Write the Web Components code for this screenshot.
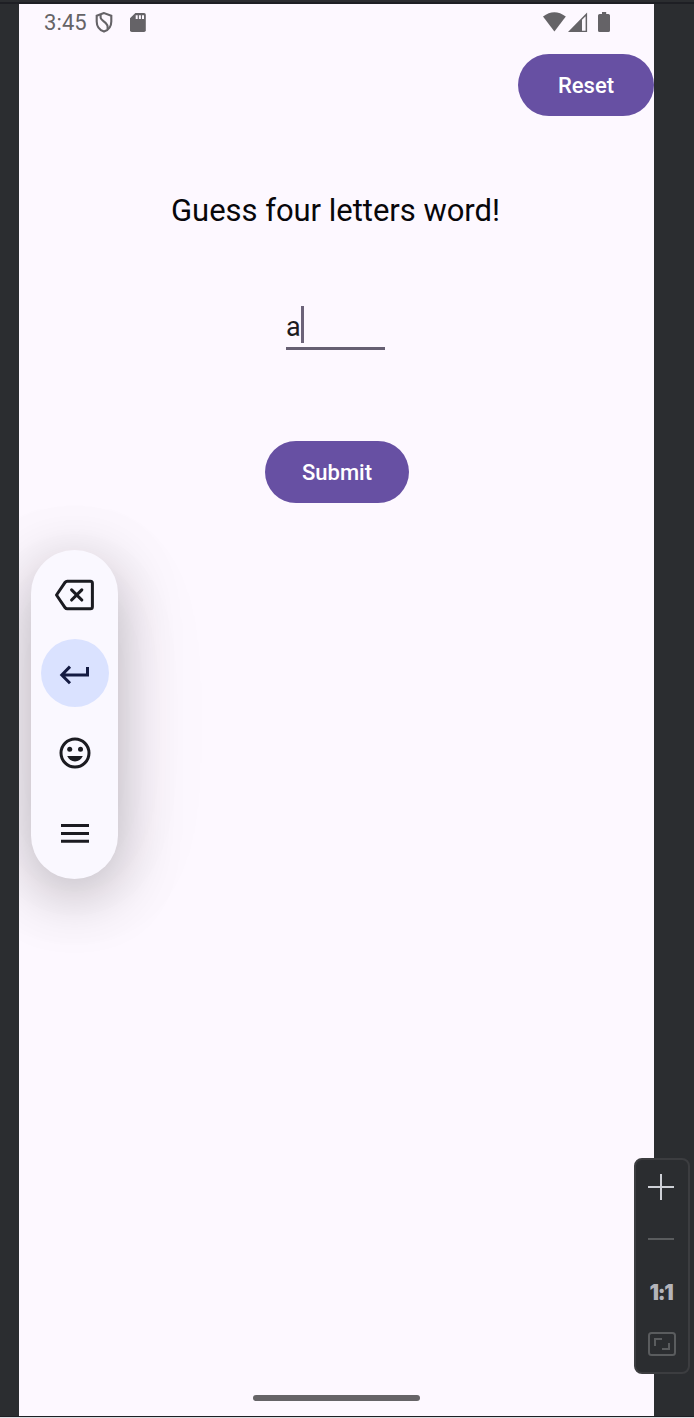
<!DOCTYPE html>
<html lang="en">
<head>
<meta charset="utf-8">
<title>Word game</title>
<style>
html,body{margin:0;height:1418px;background:#2b2d30;overflow:hidden}
body{font-family:Roboto,sans-serif}
</style>
</head>
<body>
<emulator-frame>
  <status-bar></status-bar>
  <game-screen>
    <pill-button slot="reset" style="--w:136px">Reset</pill-button>
    <span slot="title">Guess four letters word!</span>
    <guess-field slot="field">a</guess-field>
    <pill-button slot="submit" style="--w:144px">Submit</pill-button>
  </game-screen>
  <input-toolbar slot="overlay"></input-toolbar>
  <zoom-panel slot="overlay"></zoom-panel>
</emulator-frame>
<script>
const define = (name, html) => customElements.define(name, class extends HTMLElement {
  constructor() {
    super();
    this.attachShadow({mode: 'open'}).innerHTML = html;
  }
});

define('emulator-frame', `
<style>
:host{display:flex;flex-direction:column;position:relative;width:694px;height:1418px;background:#2b2d30;box-sizing:border-box;border-bottom:1px solid #dcdce0}
.top{height:2px;flex:none;border-bottom:2px solid #1e1f24}
.device{flex:1;width:635px;margin-left:19px;background:#fdf8ff;display:flex;flex-direction:column}
.end{height:1px;background:#1e1f24}
.nav{width:167px;height:6px;border-radius:3px;background:#666467;margin:auto 0 15px 234px}
</style>
<div class="top"></div>
<div class="device"><slot></slot><div class="nav"></div></div>
<div class="end"></div>
<slot name="overlay"></slot>`);

define('status-bar', `
<style>
:host{display:flex;height:49.5px;color:#656367;position:relative}
.time{font-size:22px;line-height:26px;margin:6px 0 0 25px;width:51px;letter-spacing:.1px}
svg{display:block;flex:none;margin-top:7px;height:23px}
</style>
<span class="time">3:45</span>
<svg width="20" viewBox="95 11 20 23" fill="none" stroke="currentColor" stroke-width="2.1"><path d="M104 13.1L96.7 15.7V21.5C96.7 26.3 99.7 30.1 104 31.6C108.3 30.1 111.3 26.3 111.3 21.5V15.7Z"/><path d="M100.6 14.8V17.6C100.6 20.6 107.6 22.5 107.6 26.5V29"/></svg>
<svg width="20" style="margin-left:14px" viewBox="129 11 20 23"><path fill="currentColor" d="M135.4 13H144Q145.8 13 145.8 14.8V30.2Q145.8 32 144 32H131.8Q130 32 130 30.2V18.3Z"/><path fill="#fdf8ff" d="M135.7 15.3h2v3.6h-2zM138.9 15.3h2v3.6h-2zM142 15.3h2v3.6h-2z"/></svg>
<svg width="72" style="margin-left:393px" viewBox="542 11 72 23" fill="currentColor"><path d="M543 16.6Q554.3 7.8 565.8 16.6L554.4 31.4Z"/><path fill-rule="evenodd" d="M587.1 12.5V32H568ZM582 19.8V30.7H585.6V16.2Z"/><path d="M602 12h4.2v2H608.4Q610 14 610 15.6V30.4Q610 32 608.4 32H599.6Q598 32 598 30.4V15.6Q598 14 599.6 14H602Z"/></svg>`);

define('game-screen', `
<style>
:host{display:flex;flex-direction:column;align-items:flex-start}
slot{display:block}
.reset{align-self:flex-end;height:63px}
.title{margin:75.5px 0 0 152px;height:38px;font-size:31px;line-height:38px;letter-spacing:-.03px;color:#08070a;white-space:nowrap}
.field{margin:76px 0 0 267px}
.submit{margin:90.5px 0 0 246px}
</style>
<slot class="reset" name="reset"></slot>
<slot class="title" name="title"></slot>
<slot class="field" name="field"></slot>
<slot class="submit" name="submit"></slot>`);

define('pill-button', `
<style>
:host{display:block}
button{display:block;width:var(--w);height:62.5px;border:0;padding:2px 0 0;border-radius:32px;background:#6750a3;color:#fff;font:500 22px/26px Roboto,sans-serif;letter-spacing:.02px}
</style>
<button><slot></slot></button>`);

define('guess-field', `
<style>
:host{display:flex;width:99px;height:41px;border-bottom:3px solid #665f72;color:#1c1b20;font-size:27px;line-height:43px}
i{width:3px;height:37px;background:#6c6379}
span{width:14.5px}
</style>
<span><slot></slot></span><i></i>`);

define('input-toolbar', `
<style>
:host{position:absolute;left:19px;top:430px;width:260px;height:600px;overflow:hidden}
.bar{box-sizing:border-box;width:87px;height:329px;margin:120px 0 0 12px;padding-top:10px;border-radius:44px;background:#faf8ff;display:flex;flex-direction:column;align-items:center;box-shadow:0 15px 62px rgba(0,0,0,.28),0 10px 120px rgba(90,20,70,.05);color:#1b1b21}
.key{width:68px;height:68px;border-radius:50%;display:grid;place-items:center;margin-bottom:11.5px;flex:none}
.enter{background:#dae2ff;color:#141b42;margin-top:-.5px;margin-bottom:12px}
svg{display:block}
</style>
<div class="bar">
<div class="key"><svg width="68" height="68" viewBox="41 560 68 68" fill="none" stroke="currentColor" stroke-width="3" stroke-linejoin="round"><path d="M67.2 581.2H90.4Q92.4 581.2 92.4 583.2V606.8Q92.4 608.8 90.4 608.8H67.2Q66 608.8 65.2 607.8L56.5 595L65.2 582.2Q66 581.2 67.2 581.2Z"/><path stroke-width="3.1" stroke-linecap="round" d="M71.6 589.8L81.8 600M81.8 589.8L71.6 600"/></svg></div>
<div class="key enter"><svg width="68" height="68" viewBox="41 639 68 68" fill="none" stroke="currentColor" stroke-width="3"><path d="M87.5 667V675H62M70 666.6L61.8 675L70 683.2"/></svg></div>
<div class="key"><svg width="68" height="68" viewBox="41 719.5 68 68" fill="currentColor"><circle cx="75" cy="753.5" r="14" fill="none" stroke="currentColor" stroke-width="3"/><circle cx="69.7" cy="749.8" r="2.5"/><circle cx="80.5" cy="749.8" r="2.5"/><path d="M67.2 756.6H82.8C81.3 760 78.5 762 75 762S68.7 760 67.2 756.6Z"/></svg></div>
<div class="key"><svg width="68" height="68" viewBox="41 799 68 68" fill="currentColor"><path d="M61 824h28v3H61zM61 832h28v3H61zM61 839.8h28v3H61z"/></svg></div>
</div>`);

define('zoom-panel', `
<style>
:host{position:absolute;left:634px;top:1158px;width:56px;height:216px;box-sizing:border-box;border:2px solid #3c3d40;border-radius:8px;background:#2b2d30;display:grid;grid-template-rows:54px 50px 54px 50px;justify-items:center;align-items:center}
svg{display:block}
b{font:900 21px/24px Inter,sans-serif;color:#b4b4ba;letter-spacing:-1.2px;padding:3px 2px 0 0}
</style>
<svg width="52" height="54" viewBox="636 1160 52 54" fill="#ced0d6"><path d="M648 1186h26v2H648zM660 1174h2v26h-2z"/></svg>
<svg width="52" height="50" viewBox="636 1214 52 50"><path fill="#5a5c5e" d="M648 1238h26v2H648z"/></svg>
<b>1:1</b>
<svg width="52" height="50" viewBox="636 1318 52 50" fill="none" stroke="#5a5c5e" stroke-width="2"><rect x="649" y="1333" width="26" height="22" rx="2.5"/><path d="M655 1346V1339H662M669 1343V1349H662"/></svg>`);
</script>
</body>
</html>
